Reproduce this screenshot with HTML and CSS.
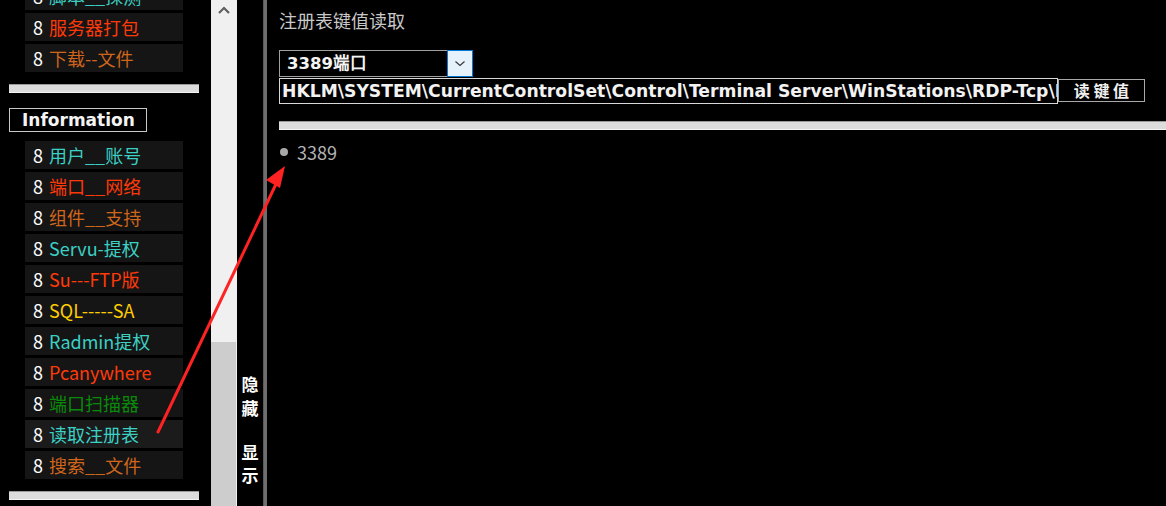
FILE: index.html
```html
<!DOCTYPE html>
<html lang="zh-CN">
<head>
<meta charset="utf-8">
<title>注册表键值读取</title>
<link rel="stylesheet" href="styles.css">
</head>
<body>
<div class="page">
  <aside class="left">
    <div class="left-inner">
      <ul class="menu">
        <li class="item"><span class="n">8</span> <span class="cyan">脚本__探测</span></li>
        <li class="item"><span class="n">8</span> <span class="red">服务器打包</span></li>
        <li class="item"><span class="n">8</span> <span class="brown">下载--文件</span></li>
      </ul>
      <div class="bar"></div>
      <div class="info">Information</div>
      <ul class="menu menu-b">
        <li class="item"><span class="n">8</span> <span class="cyan">用户__账号</span></li>
        <li class="item"><span class="n">8</span> <span class="red">端口__网络</span></li>
        <li class="item"><span class="n">8</span> <span class="brown">组件__支持</span></li>
        <li class="item"><span class="n">8</span> <span class="cyan">Servu-提权</span></li>
        <li class="item"><span class="n">8</span> <span class="red">Su---FTP版</span></li>
        <li class="item"><span class="n">8</span> <span class="yellow">SQL-----SA</span></li>
        <li class="item"><span class="n">8</span> <span class="cyan">Radmin提权</span></li>
        <li class="item"><span class="n">8</span> <span class="red">Pcanywhere</span></li>
        <li class="item"><span class="n">8</span> <span class="green">端口扫描器</span></li>
        <li class="item item-hover"><span class="n">8</span> <span class="cyan">读取注册表</span></li>
        <li class="item"><span class="n">8</span> <span class="brown">搜索__文件</span></li>
      </ul>
      <div class="bar bar-b"></div>
    </div>
  </aside>
  <div class="scrollbar">
    <div class="sb-arrow">
      <svg width="12" height="8" viewBox="0 0 12 8"><path d="M1 7 L6 2 L11 7" fill="none" stroke="#606060" stroke-width="2.2"/></svg>
    </div>
    <div class="sb-track"></div>
    <div class="sb-thumb"></div>
  </div>
  <div class="toggle">
    <div class="vtext">隐<br>藏</div>
    <div class="vtext vtext-b">显<br>示</div>
  </div>
  <div class="divider"></div>
  <main class="main">
    <h1 class="title">注册表键值读取</h1>
    <div class="select">
      <span class="select-text">3389端口</span>
      <span class="select-btn">
        <svg width="12" height="7" viewBox="0 0 12 7"><path d="M1.5 1.5 L6 5.5 L10.5 1.5" fill="none" stroke="#333" stroke-width="1.1"/></svg>
      </span>
    </div>
    <div class="keyrow">
      <div class="keyinput"><span>HKLM\SYSTEM\CurrentControlSet\Control\Terminal Server\WinStations\RDP-Tcp\PortNumber</span></div>
      <div class="keybtn">读 键 值</div>
    </div>
    <div class="bar bar-main"></div>
    <ul class="result">
      <li>3389</li>
    </ul>
  </main>
  <svg class="arrow" width="1166" height="506" viewBox="0 0 1166 506">
    <line x1="158" y1="432" x2="277" y2="182" stroke="#ff2222" stroke-width="3" stroke-linecap="round"/>
    <polygon points="285,166 266,180 280,188" fill="#ff2222"/>
  </svg>
</div>
</body>
</html>
```
FILE: styles.css
```css
* { box-sizing: border-box; }
html, body { margin: 0; padding: 0; background: #000; }
body { width: 1166px; height: 506px; overflow: hidden; }

.page {
  position: relative;
  display: flex;
  height: 506px;
  font-family: "Noto Sans CJK SC", "Noto Sans", sans-serif;
}

.left { width: 211px; height: 506px; overflow: hidden; background: #000; }
.left-inner { margin-top: -18px; }

.menu {
  list-style: none;
  margin: 0 0 0 25px;
  padding: 0;
  width: 158px;
  display: flex;
  flex-direction: column;
  gap: 3px;
}
.menu-b { margin-top: 9px; }
.item {
  height: 28px;
  line-height: 28px;
  background: #151515;
  padding-left: 8px;
  font-size: 18px;
  white-space: nowrap;
  overflow: hidden;
  word-spacing: 2px;
}
.item-hover { background: #1b1b1b; }
.n { color: #fff; }
.cyan { color: #3ccfc4; word-spacing: 0; }
.red { color: #ff3a0a; word-spacing: 0; }
.brown { color: #d0651c; word-spacing: 0; }
.yellow { color: #ffcc00; word-spacing: 0; }
.green { color: #0a8a0a; word-spacing: 0; }

.bar {
  height: 9px;
  background: #dcdcdc;
  border-top: 1px solid #9a9a9a;
  border-bottom: 1px solid #f4f4f4;
}
.left .bar { width: 190px; margin: 12px 0 0 9px; }

.info {
  margin: 15px 0 0 9px;
  width: 138px;
  height: 24px;
  border: 1px solid #c8c8c8;
  color: #f4f4f4;
  font-family: "DejaVu Sans", Verdana, sans-serif;
  font-weight: bold;
  font-size: 17px;
  line-height: 22px;
  padding-left: 12px;
  white-space: nowrap;
}

.scrollbar {
  width: 26px;
  height: 506px;
  background: #f0f0f0;
  display: flex;
  flex-direction: column;
}
.sb-arrow { height: 20px; display: flex; justify-content: center; align-items: center; }
.sb-track { height: 322px; }
.sb-thumb { flex: 1; background: #cdcdcd; margin-right: 1px; }

.toggle {
  width: 26px;
  height: 506px;
  background: #000;
  display: flex;
  flex-direction: column;
  padding-top: 372px;
  align-items: center;
}
.vtext {
  color: #fff;
  font-weight: bold;
  font-size: 17px;
  line-height: 24px;
  text-align: center;
}
.vtext-b { margin-top: 20px; line-height: 23px; }

.divider { width: 4px; height: 506px; background: #6e6e6e; border-left: 1px solid #5a5a5a; }

.main { flex: 1; padding-left: 12px; min-width: 0; }
.title {
  margin: 6px 0 0 0;
  font-size: 18px;
  font-weight: normal;
  color: #c8c8c8;
  line-height: 28px;
  height: 28px;
}

.select {
  margin-top: 16px;
  width: 194px;
  height: 27px;
  border: 1px solid #a0a0a0;
  display: flex;
  align-items: stretch;
}
.select-text {
  flex: 1;
  color: #f4f4f4;
  font-family: "DejaVu Sans", Verdana, sans-serif;
  font-weight: bold;
  font-size: 16.5px;
  line-height: 25px;
  padding-left: 7px;
}
.select-btn {
  width: 26px;
  margin: -1px -1px -1px 0;
  background: #e5f1fb;
  border: 1px solid #0078d7;
  display: flex;
  align-items: center;
  justify-content: center;
}

.keyrow { display: flex; align-items: flex-start; margin-top: 1px; }
.keyinput {
  width: 779px;
  height: 26px;
  border: 1px solid #d8d8d8;
  overflow: hidden;
  white-space: nowrap;
  color: #f2f2f2;
  font-family: "DejaVu Sans", Verdana, sans-serif;
  font-weight: bold;
  font-size: 17.2px;
  line-height: 24px;
  padding-left: 2px;
}
.keybtn {
  margin-top: 1px;
  width: 87px;
  height: 23px;
  border: 1px solid #a8a8a8;
  color: #f0f0f0;
  font-weight: bold;
  font-size: 16px;
  line-height: 21px;
  text-align: center;
}

.bar-main { margin-top: 17px; }

.result {
  list-style: none;
  margin: 11px 0 0 0;
  padding: 0;
}
.result li {
  display: flex;
  align-items: center;
  color: #b4b4b4;
  font-size: 18px;
  line-height: 22px;
}
.result li::before {
  content: "";
  width: 8px;
  height: 8px;
  border-radius: 50%;
  background: #a8a8a8;
  margin: 0 9px 0 1px;
}

.arrow { position: absolute; left: 0; top: 0; pointer-events: none; }
```
